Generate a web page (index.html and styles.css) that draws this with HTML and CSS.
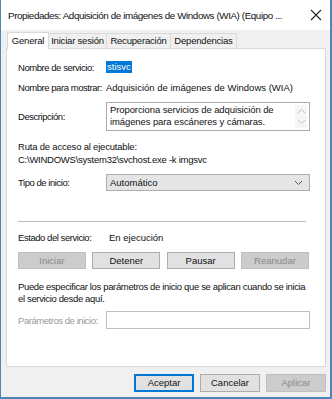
FILE: index.html
```html
<!DOCTYPE html>
<html lang="es">
<head>
<meta charset="UTF-8">
<link rel="stylesheet" href="styles.css">
</head>
<body>
<div class="window">
  <div class="titlebar">
    <span class="title">Propiedades: Adquisición de imágenes de Windows (WIA) (Equipo ...</span>
    <svg class="close" width="12" height="12" viewBox="0 0 12 12"><path d="M1 1L11 11M11 1L1 11" stroke="#222" stroke-width="1.1" fill="none"/></svg>
  </div>
  <div class="client">
    <div class="tabs">
      <div class="tab active">General</div>
      <div class="tab t-login">Iniciar sesión</div>
      <div class="tab t-recovery">Recuperación</div>
      <div class="tab t-deps">Dependencias</div>
    </div>
    <div class="panel">
      <div class="row r-name">
        <span class="label">Nombre de servicio:</span>
        <span class="selected">stisvc</span>
      </div>
      <div class="row r-display">
        <span class="label">Nombre para mostrar:</span>
        <span>Adquisición de imágenes de Windows (WIA)</span>
      </div>
      <div class="row r-desc">
        <span class="label">Descripción:</span>
        <div class="textbox">
          <div class="textbox-text">Proporciona servicios de adquisición de<br>imágenes para escáneres y cámaras.</div>
          <div class="scroll">
            <svg width="9" height="6" viewBox="0 0 9 6"><path d="M1 5L4.5 1.5L8 5" stroke="#c2c2c2" fill="none"/></svg>
            <svg width="9" height="6" viewBox="0 0 9 6"><path d="M1 1L4.5 4.5L8 1" stroke="#c2c2c2" fill="none"/></svg>
          </div>
        </div>
      </div>
      <div class="path-label">Ruta de acceso al ejecutable:</div>
      <div class="path">C:\WINDOWS\system32\svchost.exe -k imgsvc</div>
      <div class="row r-type">
        <span class="label">Tipo de inicio:</span>
        <div class="select">
          <span>Automático</span>
          <svg width="9" height="6" viewBox="0 0 9 6"><path d="M1 1L4.5 4.5L8 1" stroke="#555" fill="none"/></svg>
        </div>
      </div>
      <div class="separator"></div>
      <div class="row r-state">
        <span class="label">Estado del servicio:</span>
        <span class="state">En ejecución</span>
      </div>
      <div class="buttons">
        <div class="btn disabled">Iniciar</div>
        <div class="btn">Detener</div>
        <div class="btn">Pausar</div>
        <div class="btn disabled">Reanudar</div>
      </div>
      <p class="note">Puede especificar los parámetros de inicio que se aplican cuando se inicia<br>el servicio desde aquí.</p>
      <div class="row r-params">
        <span class="label muted">Parámetros de inicio:</span>
        <div class="input"></div>
      </div>
    </div>
    <div class="footer">
      <div class="btn default">Aceptar</div>
      <div class="btn">Cancelar</div>
      <div class="btn disabled">Aplicar</div>
    </div>
  </div>
</div>
</body>
</html>
```
FILE: styles.css
```css
body {
    margin: 0;
    font-family: "Liberation Sans", Arial, sans-serif;
    font-size: 9.5px;
    color: #111;
    background: #fff;
}
.window {
    width: 332px;
    height: 399px;
    box-sizing: border-box;
    border: 1px solid #4a86b8;
    border-top: none;
    border-right-width: 2px;
    border-bottom-width: 2px;
    display: flex;
    flex-direction: column;
    background: #f0f0f0;
}
.titlebar {
    height: 30px;
    background: #fff;
    display: flex;
    align-items: center;
    justify-content: space-between;
    padding: 0 7px 0 7px;
    flex-shrink: 0;
}
.title {
    font-size: 9.8px;
    letter-spacing: -0.4px;
    white-space: nowrap;
    color: #111;
}
.close {
    margin-right: 1px;
}
.client {
    flex: 1;
    padding: 2px 4px 0 5px;
    display: flex;
    flex-direction: column;
}
.tabs {
    display: flex;
    height: 16px;
    align-items: flex-end;
    padding-left: 1px;
    letter-spacing: -0.2px;
}
.tab {
    height: 15px;
    line-height: 14px;
    text-align: center;
    white-space: nowrap;
    border: 1px solid #d9d9d9;
    border-bottom: none;
    border-left: none;
    background: #f0f0f0;
    box-sizing: border-box;
}
.tab.active {
    width: 42px;
    height: 17px;
    background: #fff;
    border-left: 1px solid #d9d9d9;
    margin-bottom: -1px;
    position: relative;
    z-index: 1;
    line-height: 15px;
}
.t-login { width: 58px; }
.t-recovery { width: 64px; }
.t-deps { width: 66px; }
.panel {
    height: 319px;
    background: #fff;
    border: 1px solid #d9d9d9;
    padding: 0 15px 0 11px;
    box-sizing: border-box;
    white-space: nowrap;
}
.row {
    display: flex;
    align-items: center;
}
.label {
    width: 88px;
    flex-shrink: 0;
    letter-spacing: -0.45px;
}
.muted { color: #9a9a9a; }
.r-name { margin-top: 12px; height: 12px; }
.selected {
    background: #0078d7;
    color: #fff;
    padding: 0 1px;
    line-height: 12px;
}
.r-display { margin-top: 8px; height: 12px; }
.r-desc { margin-top: 9px; }
.textbox {
    width: 204px;
    height: 29px;
    border: 1px solid #acacac;
    box-sizing: border-box;
    display: flex;
    justify-content: space-between;
}
.textbox-text {
    padding: 1px 0 0 3px;
    line-height: 12px;
    letter-spacing: -0.1px;
}
.scroll {
    width: 12px;
    display: flex;
    flex-direction: column;
    justify-content: space-around;
    align-items: center;
    background: #f5f5f5;
    margin: 2px 2px 2px 0;
}
.path-label { margin-top: 9px; line-height: 13px; letter-spacing: -0.2px; }
.path { line-height: 13px; letter-spacing: -0.25px; }
.r-type { margin-top: 8px; }
.select {
    width: 204px;
    height: 17px;
    border: 1px solid #adadad;
    background: #e5e5e5;
    box-sizing: border-box;
    display: flex;
    align-items: center;
    justify-content: space-between;
    padding: 0 6px 0 3px;
}
.separator {
    height: 1px;
    background: #bdbdbd;
    margin-top: 30px;
    width: 288px;
}
.r-state { margin-top: 9px; height: 12px; }
.state { padding-left: 3px; }
.buttons {
    display: flex;
    justify-content: space-between;
    margin-top: 9px;
    width: 291px;
}
.btn {
    width: 68px;
    height: 17px;
    box-sizing: border-box;
    border: 1px solid #adadad;
    background: #e1e1e1;
    text-align: center;
    line-height: 15px;
}
.btn.disabled {
    background: #cccccc;
    border-color: #bfbfbf;
    color: #8a8a8a;
}
.note {
    margin: 12px 0 0;
    line-height: 12px;
    letter-spacing: -0.35px;
}
.r-params { margin-top: 6px; }
.input {
    width: 204px;
    height: 18px;
    border: 1px solid #bfbfbf;
    box-sizing: border-box;
}
.footer {
    display: flex;
    justify-content: flex-end;
    gap: 6px;
    margin-top: 7px;
}
.footer .btn {
    width: 60px;
    height: 18px;
    line-height: 16px;
}
.footer .btn.default {
    border: 2px solid #0078d7;
    line-height: 14px;
}
```
